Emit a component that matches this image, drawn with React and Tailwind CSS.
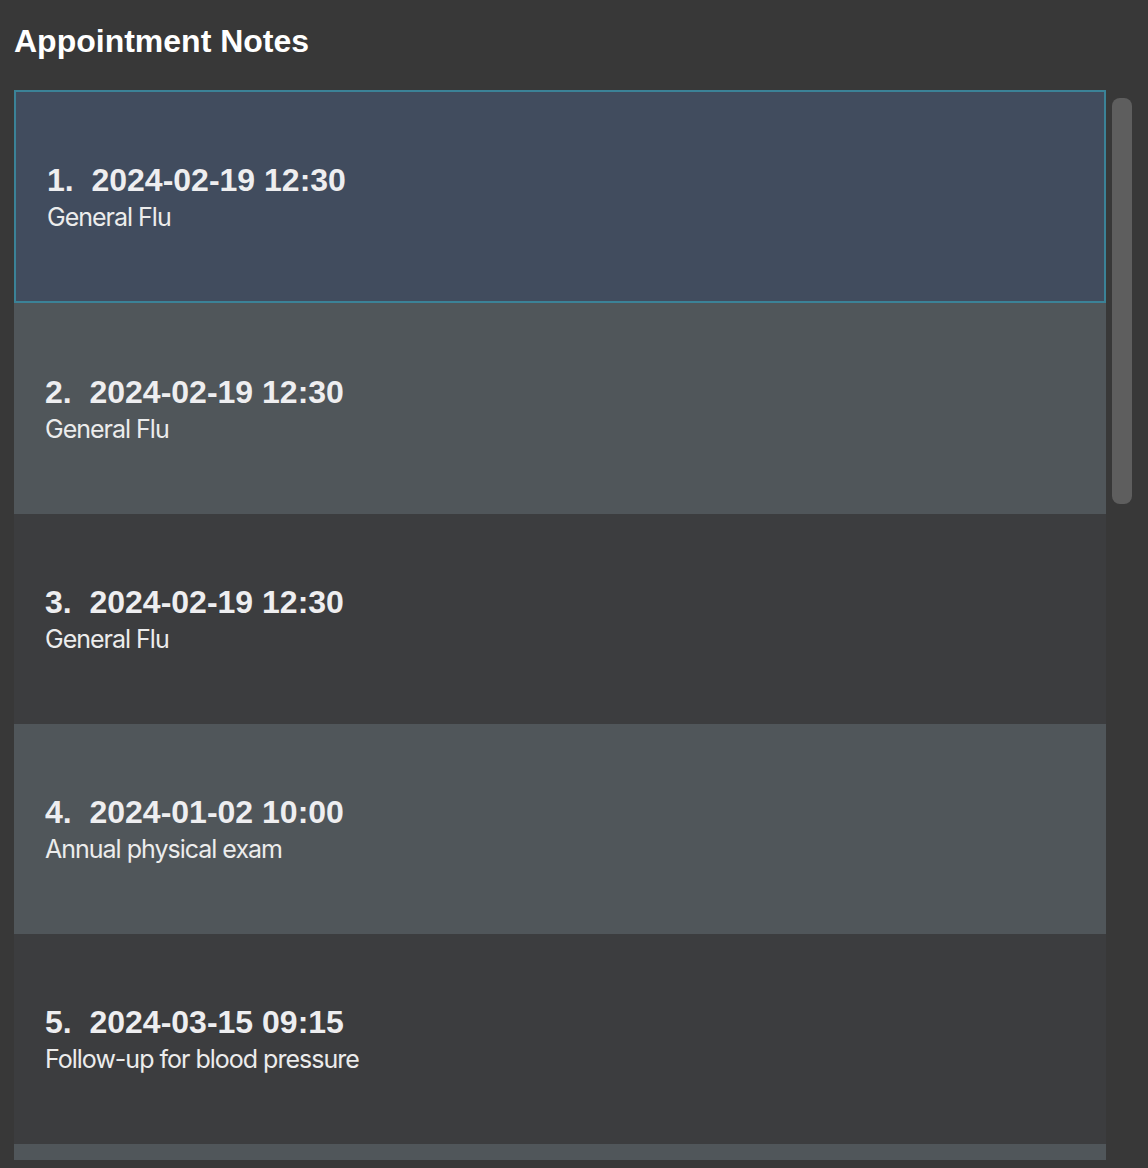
import React from "react";

const notes = [
  { id: 1, date: "2024-02-19 12:30", text: "General Flu" },
  { id: 2, date: "2024-02-19 12:30", text: "General Flu" },
  { id: 3, date: "2024-02-19 12:30", text: "General Flu" },
  { id: 4, date: "2024-01-02 10:00", text: "Annual physical exam" },
  { id: 5, date: "2024-03-15 09:15", text: "Follow-up for blood pressure" },
];

const NoteCard = ({ index, note, selected }) => {
  const base = selected
    ? "bg-[#414c5e] border-2 border-[#3b8297] pl-[31px] pt-[70px] h-[213px]"
    : index === 1
    ? "bg-[#50565a] pl-[31px] pt-[71px] h-[211px]"
    : index % 2 === 1
    ? "bg-[#50565a] pl-[31px] pt-[70px] h-[210px]"
    : "bg-[#3c3d3f] pl-[31px] pt-[70px] h-[210px]";

  return (
    <div className={`shrink-0 ${base}`}>
      <div className="font-['Liberation_Sans',Arial,sans-serif] font-bold text-[32px] leading-[36px] text-[#eeeef0] whitespace-pre">
        {`${index + 1}.  ${note.date}`}
      </div>
      <div className="font-['Inter',sans-serif] text-[25px] leading-[30px] tracking-[-1px] text-[#ececec] mt-[4px]">
        {note.text}
      </div>
    </div>
  );
};

export default function App() {
  return (
    <div className="w-[1148px] h-[1168px] bg-[#383838] overflow-hidden flex flex-col">
      <h1 className="pl-[14px] pt-[22px] h-[90px] shrink-0 font-['Liberation_Sans',Arial,sans-serif] font-bold text-[32px] leading-[38px] text-white">
        Appointment Notes
      </h1>

      <div className="flex flex-1 min-h-0">
        {/* List */}
        <div className="ml-[14px] w-[1092px] flex flex-col overflow-hidden h-[1070px]">
          {notes.map((note, index) => (
            <NoteCard
              key={note.id}
              index={index}
              note={note}
              selected={index === 0}
            />
          ))}
          {/* next row, scrolled out of view */}
          <div className="shrink-0 h-[16px] bg-[#50565a]" />
        </div>

        {/* Scrollbar */}
        <div className="ml-[6px] pt-[8px]">
          <div className="w-[20px] h-[406px] rounded-[8px] bg-[#5e5e5e]" />
        </div>
      </div>
    </div>
  );
}
